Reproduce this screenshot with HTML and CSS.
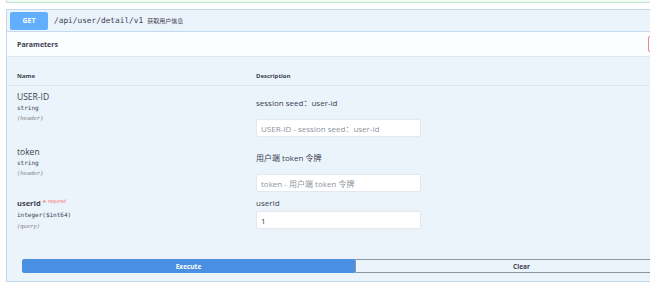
FILE: index.html
```html
<!DOCTYPE html>
<html>
<head>
<meta charset="utf-8">
<link rel="stylesheet" href="styles.css">
</head>
<body>
<div class="prev-block"></div>
<div class="opblock">
  <div class="summary">
    <span class="method">GET</span>
    <span class="path">/api/user/detail/v1</span>
    <span class="summary-desc">获取用户信息</span>
  </div>
  <div class="section-header">
    <span class="section-title">Parameters</span>
    <span class="cancel"></span>
  </div>
  <div class="params">
    <div class="head-row">
      <div class="col-name">Name</div>
      <div class="col-desc">Description</div>
    </div>
    <div class="param-row r1">
      <div class="col-name">
        <div class="pname">USER-ID</div>
        <div class="ptype">string</div>
        <div class="pin">(header)</div>
      </div>
      <div class="col-desc">
        <p class="md">session seed：user-id</p>
        <input class="field" type="text" placeholder="USER-ID - session seed：user-id">
      </div>
    </div>
    <div class="param-row r2">
      <div class="col-name">
        <div class="pname">token</div>
        <div class="ptype">string</div>
        <div class="pin">(header)</div>
      </div>
      <div class="col-desc">
        <p class="md">用户端 token 令牌</p>
        <input class="field" type="text" placeholder="token - 用户端 token 令牌">
      </div>
    </div>
    <div class="param-row r3">
      <div class="col-name">
        <div class="pname req">userId <span class="star">*</span><span class="required">required</span></div>
        <div class="ptype t3">integer($int64)</div>
        <div class="pin">(query)</div>
      </div>
      <div class="col-desc">
        <div class="label">userId</div>
        <input class="field" type="text" value="1">
      </div>
    </div>
  </div>
  <div class="actions">
    <button class="btn execute">Execute</button>
    <button class="btn clear">Clear</button>
  </div>
</div>
</body>
</html>
```

FILE: styles.css
```css
html, body {
  margin: 0;
  padding: 0;
  background: #ffffff;
  overflow: hidden;
  width: 650px;
  height: 284px;
  font-family: "Open Sans", "Noto Sans CJK SC", sans-serif;
  color: #3b4151;
}

.prev-block {
  margin-left: 6px;
  width: 700px;
  height: 2px;
  background: #f1faf5;
  border: 1px solid #bfe6cf;
  border-top: none;
  border-right: none;
}

.opblock {
  margin: 6px 0 0 6px;
  width: 700px;
  background: #ebf3fb;
  border: 1px solid #c3d7ea;
  border-right: none;
  box-sizing: border-box;
}

.summary {
  display: flex;
  align-items: center;
  height: 22px;
  box-sizing: border-box;
  padding-left: 3px;
  border-bottom: 1px solid #c6daee;
}

.method {
  display: inline-flex;
  align-items: center;
  justify-content: center;
  width: 38px;
  height: 18px;
  background: #61affe;
  color: #ffffff;
  font-size: 7px;
  font-weight: 700;
  border-radius: 2px;
}

.path {
  margin-left: 6px;
  font-family: "DejaVu Sans Mono", "Liberation Mono", monospace;
  font-size: 7.8px;
  color: #3b4151;
}

.summary-desc {
  margin-left: 4px;
  font-size: 6px;
  color: #3b4151;
}

.section-header {
  display: flex;
  align-items: center;
  justify-content: space-between;
  height: 25px;
  box-sizing: border-box;
  background: #fbfdff;
  border-bottom: 1px solid #dde8f3;
  padding-left: 10px;
}

.section-title {
  font-size: 7px;
  font-weight: 700;
}

.cancel {
  display: block;
  margin-right: 18px;
  width: 40px;
  height: 16px;
  box-sizing: border-box;
  border: 1px solid #e8878a;
  border-radius: 2px;
}

.head-row {
  display: flex;
  height: 29px;
  box-sizing: border-box;
  padding: 15px 0 0 10px;
  border-bottom: 1px solid #dbe6f1;
  font-size: 6px;
  font-weight: 700;
  line-height: 8px;
  color: #3b4151;
}

.col-name {
  width: 239px;
  flex: none;
}

.col-desc {
  flex: 1;
}

.param-row {
  display: flex;
  box-sizing: border-box;
  padding: 5px 0 0 10px;
}

.param-row.r1 {
  height: 55px;
}

.param-row.r2 {
  height: 51px;
}

.param-row.r3 {
  height: 40px;
}

.pname {
  font-size: 8.5px;
  line-height: 12px;
  height: 12px;
  color: #3b4151;
}

.pname.req {
  font-weight: 700;
  font-size: 7.5px;
}

.star {
  color: #ff6f6f;
  font-size: 6px;
  position: relative;
  top: -2px;
}

.required {
  color: #ff6f6f;
  font-size: 4.5px;
  font-weight: 400;
  position: relative;
  top: -3px;
  margin-left: 2px;
}

.ptype {
  font-family: "DejaVu Sans Mono", "Liberation Mono", monospace;
  font-size: 6px;
  line-height: 10px;
  height: 10px;
  color: #3b4151;
}

.ptype.t3 {
  line-height: 12px;
  height: 12px;
}

.pin {
  font-family: "DejaVu Sans Mono", "Liberation Mono", monospace;
  font-size: 5.5px;
  font-style: italic;
  line-height: 10px;
  height: 10px;
  color: #808080;
}

.md {
  margin: 6px 0 10px;
  height: 12px;
  font-size: 8px;
  line-height: 12px;
  color: #3b4151;
}

.label {
  font-size: 8px;
  line-height: 12px;
  height: 12px;
  margin-bottom: 2px;
  color: #3b4151;
}

.field {
  display: block;
  width: 165px;
  height: 18px;
  box-sizing: border-box;
  margin: 0;
  padding: 0 4px;
  border: 1px solid #e3e8ee;
  border-radius: 2px;
  background: #ffffff;
  font-family: "Open Sans", "Noto Sans CJK SC", sans-serif;
  font-size: 8px;
  color: #3b4151;
  outline: none;
}

.field::placeholder {
  color: #8e949c;
}

.actions {
  display: flex;
  padding: 27px 0 8px 15px;
}

.btn {
  width: 333px;
  height: 14px;
  box-sizing: border-box;
  margin: 0;
  padding: 0;
  font-family: "Open Sans", sans-serif;
  font-size: 6.5px;
  font-weight: 700;
  cursor: pointer;
}

.execute {
  background: #4990e2;
  color: #ffffff;
  border: 1px solid #4990e2;
  border-radius: 2px 0 0 2px;
}

.clear {
  background: transparent;
  color: #3b4151;
  border: 1px solid #8b94a1;
  border-radius: 0 2px 2px 0;
}
```
